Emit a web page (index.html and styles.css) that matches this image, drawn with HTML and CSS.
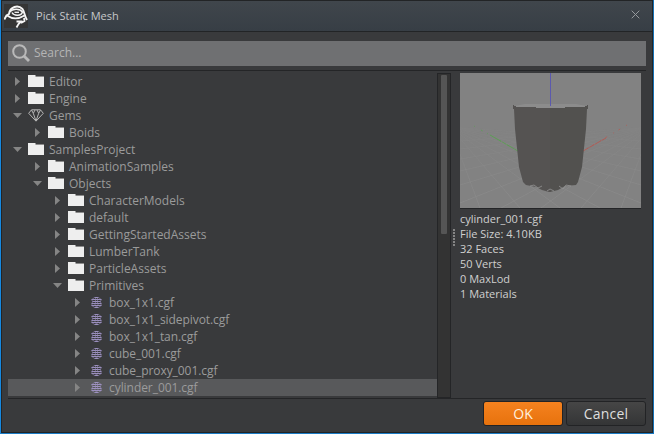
FILE: index.html
```html
<!DOCTYPE html>
<html lang="en">
<head>
<meta charset="utf-8">
<title>Pick Static Mesh</title>
<link rel="stylesheet" href="styles.css">
</head>
<body>
<svg class="defs" aria-hidden="true">
  <symbol id="folder" viewBox="0 0 16 12"><path d="M0 0H7L8 1H16V12H0Z" fill="#eee"/><path d="M7.5 1.5H16" stroke="#8b8b8b"/></symbol>
  <symbol id="closed" viewBox="0 0 9 9"><path d="M2 0L7 4.5L2 9Z" fill="#858585"/></symbol>
  <symbol id="open" viewBox="0 0 9 9"><path d="M0 2H9L4.5 7Z" fill="#858585"/></symbol>
  <symbol id="gem" viewBox="0 0 16 13"><path d="M3.5 .8H12.5L15.3 4.3L8 12.2L.7 4.3ZM3.5 1L5.3 4.3L8 12L10.7 4.3L12.5 1M5.3 4.3L7 1M10.7 4.3L9 1" fill="none" stroke="#b5b5b5" stroke-width="1"/></symbol>
  <symbol id="mesh" viewBox="0 0 11 11"><path d="M3.500 .5H7.500M.5 2.500H10.500M1.500 4.500H9.500M.5 6.500H10.500M.5 8.500H10.500M3.500 10.500H7.500" stroke="#a99bd0" stroke-width=".85"/><path d="M3.500 .5L.8 2.500L1.500 4.500L.8 8.500L3.500 10.500M7.500 .5L10.200 2.500L9.500 4.500L10.200 8.500L7.500 10.500M5.500 .5L3.500 2.500L5.500 4.500L3.500 6.500L5.500 10.500M5.500 .5L7.500 2.500L5.500 4.500L7.500 6.500L5.500 10.500" fill="none" stroke="#a395c8" stroke-width=".5"/></symbol>
</svg>
<main class="dialog">
  <header class="titlebar">
    <svg class="logo" viewBox="0 0 24 24"><path d="M0 0H24V24H0Z" fill="#353535"/><g fill="none" stroke="#f5f5f5"><path d="M.3 15.500L2.500 11.500L5 10C6 2.500 14 .5 18.500 5C20.500 7.500 20 11 23 16" stroke-width="1.900"/><path d="M5.500 8C9 4 16 4.500 18.500 8C17.500 12 10 12.500 8 8.500" stroke-width="1.400"/><path d="M10.500 8.300H15" stroke-width="1.300"/><path d="M3 11.500C8 15 14 15.500 20.500 11.500" stroke-width="1.900"/><path d="M20 14L20.500 17L17 19M18.500 17.500H12.500M16.500 18L14.500 20L12.500 23.500" stroke-width="1.800"/></g></svg>
    <h1>Pick Static Mesh</h1>
    <svg class="close" viewBox="0 0 9 9"><path d="M.7 .7L8.300 8.300M8.300 .7L.7 8.300" stroke="#969a9d" stroke-width="1"/></svg>
  </header>
  <div class="search">
    <svg viewBox="0 0 18 18"><circle cx="7.500" cy="7.500" r="6.300" fill="none" stroke="#b9b9b9" stroke-width="2"/><path d="M12 12L17 17" stroke="#b9b9b9" stroke-width="2.800"/></svg>
    <span>Search...</span>
  </div>
  <section class="content">
    <ul class="tree">
      <li><svg class="arrow"><use href="#closed"/></svg><svg class="folder"><use href="#folder"/></svg><span>Editor</span></li>
      <li><svg class="arrow"><use href="#closed"/></svg><svg class="folder"><use href="#folder"/></svg><span>Engine</span></li>
      <li><svg class="arrow"><use href="#open"/></svg><svg class="gem"><use href="#gem"/></svg><span>Gems</span></li>
      <li class="l1"><svg class="arrow"><use href="#closed"/></svg><svg class="folder"><use href="#folder"/></svg><span>Boids</span></li>
      <li><svg class="arrow"><use href="#open"/></svg><svg class="folder"><use href="#folder"/></svg><span>SamplesProject</span></li>
      <li class="l1"><svg class="arrow"><use href="#closed"/></svg><svg class="folder"><use href="#folder"/></svg><span>AnimationSamples</span></li>
      <li class="l1"><svg class="arrow"><use href="#open"/></svg><svg class="folder"><use href="#folder"/></svg><span>Objects</span></li>
      <li class="l2"><svg class="arrow"><use href="#closed"/></svg><svg class="folder"><use href="#folder"/></svg><span>CharacterModels</span></li>
      <li class="l2"><svg class="arrow"><use href="#closed"/></svg><svg class="folder"><use href="#folder"/></svg><span>default</span></li>
      <li class="l2"><svg class="arrow"><use href="#closed"/></svg><svg class="folder"><use href="#folder"/></svg><span>GettingStartedAssets</span></li>
      <li class="l2"><svg class="arrow"><use href="#closed"/></svg><svg class="folder"><use href="#folder"/></svg><span>LumberTank</span></li>
      <li class="l2"><svg class="arrow"><use href="#closed"/></svg><svg class="folder"><use href="#folder"/></svg><span>ParticleAssets</span></li>
      <li class="l2"><svg class="arrow"><use href="#open"/></svg><svg class="folder"><use href="#folder"/></svg><span>Primitives</span></li>
      <li class="l3"><svg class="arrow"><use href="#closed"/></svg><svg class="mesh"><use href="#mesh"/></svg><span>box_1x1.cgf</span></li>
      <li class="l3"><svg class="arrow"><use href="#closed"/></svg><svg class="mesh"><use href="#mesh"/></svg><span>box_1x1_sidepivot.cgf</span></li>
      <li class="l3"><svg class="arrow"><use href="#closed"/></svg><svg class="mesh"><use href="#mesh"/></svg><span>box_1x1_tan.cgf</span></li>
      <li class="l3"><svg class="arrow"><use href="#closed"/></svg><svg class="mesh"><use href="#mesh"/></svg><span>cube_001.cgf</span></li>
      <li class="l3"><svg class="arrow"><use href="#closed"/></svg><svg class="mesh"><use href="#mesh"/></svg><span>cube_proxy_001.cgf</span></li>
      <li class="l3 selected"><svg class="arrow"><use href="#closed"/></svg><svg class="mesh"><use href="#mesh"/></svg><span>cylinder_001.cgf</span></li>
    </ul>
    <div class="scrollbar"><div class="thumb"></div></div>
    <div class="splitter"><i></i><i></i><i></i><i></i><i></i><i></i></div>
    <aside class="preview">
      <svg class="viewport" viewBox="0 0 181 135" preserveAspectRatio="none">
        <defs>
          <linearGradient id="fade" x1="0" y1="0" x2="0" y2="1"><stop offset="0" stop-color="#fff" stop-opacity=".15"/><stop offset="1" stop-color="#fff"/></linearGradient>
          <mask id="gridmask"><path d="M0 50H181V135H0Z" fill="url(#fade)"/></mask>
        </defs>
        <path d="M0 0H181V135H0Z" fill="#828282"/>
        <g mask="url(#gridmask)"><path d="M-10 54L20 135M-10 54L60 135M-10 54L100 135M-10 54L140 135M-10 54L181 130M-10 54L181 112M-10 54L181 98M-10 54L181 86M-10 54L181 76M-10 54L181 68M191 54L161 135M191 54L121 135M191 54L81 135M191 54L41 135M191 54L0 130M191 54L0 112M191 54L0 98M191 54L0 86M191 54L0 76M191 54L0 68" stroke="#8e8e8e" stroke-width=".6" fill="none"/></g>
        <path d="M14 53L58 78" stroke="#5b9e53" stroke-width=".8" stroke-dasharray="1 7 2 5"/><path d="M30 62L58 78" stroke="#58a04f" stroke-width=".9" stroke-dasharray="5 1 7 1"/>
        <path d="M167 52L123 78" stroke="#b25b54" stroke-width=".8" stroke-dasharray="1 7 2 5"/><path d="M146 65L123 78" stroke="#b45750" stroke-width=".9" stroke-dasharray="5 1 7 1"/>
        <path d="M54 33L65 31H116L127 33V36H54Z" fill="#8c8c8c"/>
        <path d="M53 32H54V33H56V34H76V35H90V119L89 119L82 117L76 114L66 112L63 109L59 94L55 56L54 36H53Z" fill="#555352"/>
        <path d="M90 35H105V34H125V33H127V32H128V36H127L126 56L122 94L118 109L116 112L105 113L98 117L90 119Z" fill="#52514f"/>
        <path d="M70 113L74 112L78 115L82 113M87 118L90 116L94 118M99 113L103 116L106 112L111 113" fill="none" stroke="#949494" stroke-width=".8"/>
        <path d="M90.500 0V33" stroke="#5b59ae"/>
      </svg>
      <div class="info"><p>cylinder_001.cgf</p><p>File Size: 4.10KB</p><p>32 Faces</p><p>50 Verts</p><p>0 MaxLod</p><p>1 Materials</p></div>
    </aside>
  </section>
  <footer>
    <button class="ok">OK</button>
    <button class="cancel">Cancel</button>
  </footer>
</main>
</body>
</html>
```
FILE: styles.css
```css
* { box-sizing: border-box; }
body { margin: 0; background: #202224; font-family: "Open Sans", sans-serif; font-size: 12px; }
svg { display: block; flex: none; }
.defs { display: none; }
.dialog { width: 654px; height: 434px; padding: 1px 1px 1px; border-left: 1px solid #1688df; border-right: 1px solid #1671b5; border-bottom: 1px solid #1b7bc4; background: #222426; display: flex; flex-direction: column; }
.titlebar { height: 30px; flex: none; background: linear-gradient(#40464c, #373e45); display: flex; align-items: center; padding: 0 12px 0 2px; }
.logo { width: 24px; height: 24px; }
h1 { margin: 0 0 0 8px; flex: 1; font-size: 11px; line-height: 16px; font-weight: 400; color: #c6c8ca; letter-spacing: .04px; }
.close { width: 9px; height: 9px; margin-top: -3px; }
.search { margin-top: 1px; border: solid #393a3c; border-width: 9px 6px 3px; height: 37px; flex: none; background: #6f7072; color: #b5b5b5; display: flex; align-items: center; padding: 0 4px 1px; gap: 4px; line-height: 18px; }
.search svg { width: 18px; height: 18px; }
.content { height: 331px; flex: none; background: #393a3c; padding: 4px 6px 2px; display: flex; position: relative; }
.content::before { content: ""; position: absolute; left: 6px; right: 6px; top: 1px; height: 1px; background: #242527; }
.content::after { content: ""; position: absolute; left: 6px; right: 6px; bottom: 1px; height: 1px; background: #242527; }
.tree { list-style: none; margin: 0; padding: 0; width: 429px; flex: none; color: #9b9b9b; }
.tree li { height: 17px; line-height: 17px; display: flex; align-items: center; padding-left: 5px; white-space: nowrap; }
.tree .l1 { padding-left: 25px; }
.tree .l2 { padding-left: 45px; }
.tree .l3 { padding-left: 65px; letter-spacing: -.06px; }
.tree .selected { background: #58595b; }
.arrow { width: 9px; height: 9px; margin-right: 6px; }
.folder { width: 16px; height: 12px; margin: -1px 5px 0 0; }
.gem { width: 16px; height: 13px; margin: 0 5px 0 0; }
.mesh { width: 11px; height: 11px; margin: 0 7px 0 3px; }
.scrollbar { width: 14px; height: 325px; flex: none; background: #333; border: 1px solid #242527; padding: 1px 3px; }
.thumb { width: 6px; height: 159px; background: #555; border-radius: 1px; }
.splitter { width: 9px; padding: 156px 0 0 2px; display: flex; flex-direction: column; gap: 1px; }
.splitter i { width: 2px; height: 2px; flex: none; background: #858585; }
.preview { width: 181px; }
.viewport { width: 181px; height: 136px; border-bottom: 1px solid #242527; }
.info { padding-top: 2px; font-size: 11px; color: #d0d0d0; }
.info p { margin: 0; height: 15px; line-height: 15px; white-space: nowrap; }
footer { flex: 1; background: #393a3c; display: flex; justify-content: flex-end; gap: 3px; padding: 1px 6px 0; }
button { width: 80px; height: 25px; padding: 0; border: 1px solid #222325; border-radius: 3px; background: linear-gradient(#464646, #343536); color: #dedede; font: 14px/23px "Open Sans", sans-serif; }
.ok { background: linear-gradient(#f5821f, #e7720d); color: #fff0df; }
.cancel { letter-spacing: .2px; }
```
